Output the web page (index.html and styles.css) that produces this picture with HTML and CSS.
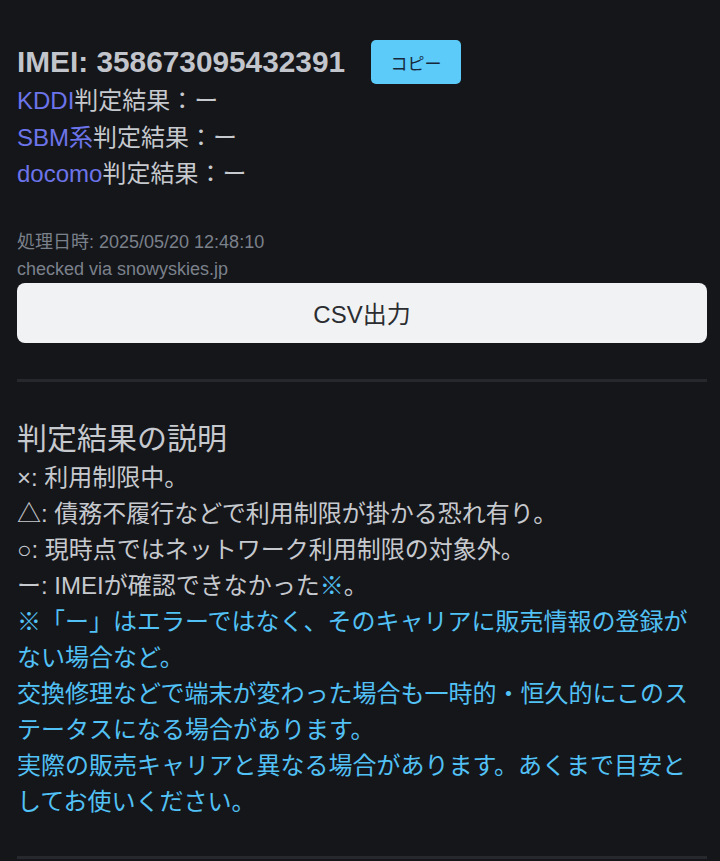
FILE: index.html
```html
<!DOCTYPE html>
<html lang="ja">
<head>
    <meta charset="UTF-8">
    <meta name="viewport" content="width=device-width, initial-scale=1.0">
    <title>IMEI判定結果</title>
    <link rel="stylesheet" href="styles.css">
</head>
<body>
    <div class="container">
        <div class="imei-row">
            <h1 class="imei">IMEI: 358673095432391</h1>
            <button class="copy-btn" id="copy-btn">コピー</button>
        </div>
        <div class="results">
            <div class="result-line"><a href="#">KDDI</a>判定結果：ー</div>
            <div class="result-line"><a href="#">SBM系</a>判定結果：ー</div>
            <div class="result-line"><a href="#">docomo</a>判定結果：ー</div>
        </div>

        <div class="meta">
            <div>処理日時: 2025/05/20 12:48:10</div>
            <div>checked via snowyskies.jp</div>
        </div>
        <button class="csv-btn" id="csv-btn">CSV出力</button>

        <div class="divider"></div>

        <h2>判定結果の説明</h2>
        <div class="legend">
            <p>×: 利用制限中。</p>
            <p>△: 債務不履行などで利用制限が掛かる恐れ有り。</p>
            <p>○: 現時点ではネットワーク利用制限の対象外。</p>
            <p>ー: IMEIが確認できなかった<span class="note-mark">※</span>。</p>
        </div>
        <div class="notes">
            <p>※「ー」はエラーではなく、そのキャリアに販売情報の登録がない場合など。</p>
            <p>交換修理などで端末が変わった場合も一時的・恒久的にこのステータスになる場合があります。</p>
            <p>実際の販売キャリアと異なる場合があります。あくまで目安としてお使いください。</p>
        </div>

        <div class="divider bottom"></div>
    </div>
</body>
</html>
```

FILE: styles.css
```css
body {
    font-family: 'Liberation Sans', 'Noto Sans CJK JP', sans-serif;
    margin: 0;
    background-color: #15161a;
    color: #c6c9ce;
}
.container {
    padding: 40px 13px 0 17px;
}
.imei-row {
    display: flex;
    align-items: center;
    gap: 26px;
    height: 44px;
}
.imei {
    margin: 0;
    font-size: 29.8px;
    font-weight: bold;
    color: #c2c5cb;
}
.copy-btn {
    background-color: #5ccbfa;
    color: #16283a;
    border: none;
    border-radius: 5px;
    width: 90px;
    height: 44px;
    font-family: inherit;
    font-size: 17px;
    cursor: pointer;
}
.results {
    margin-top: -1px;
}
.result-line {
    font-size: 24px;
    line-height: 36.5px;
}
a {
    color: #6c74ea;
    text-decoration: none;
}
.meta {
    margin-top: 36px;
    font-size: 18px;
    line-height: 27px;
    color: #7b818b;
}
.csv-btn {
    display: block;
    width: 100%;
    height: 60px;
    background-color: #f1f2f4;
    color: #2b2d31;
    border: none;
    border-radius: 8px;
    font-family: inherit;
    font-size: 24px;
    cursor: pointer;
}
.divider {
    height: 3px;
    background-color: #26282d;
    margin: 36px 0;
}
h2 {
    margin: 0;
    font-size: 30px;
    font-weight: normal;
    line-height: 42px;
    color: #c6c9ce;
}
.legend p,
.notes p {
    margin: 0;
    font-size: 24px;
    line-height: 36px;
}
.note-mark {
    color: #52c1f5;
}
.notes {
    color: #52c1f5;
}
.divider.bottom {
    margin: 36px 0 0;
}
```
